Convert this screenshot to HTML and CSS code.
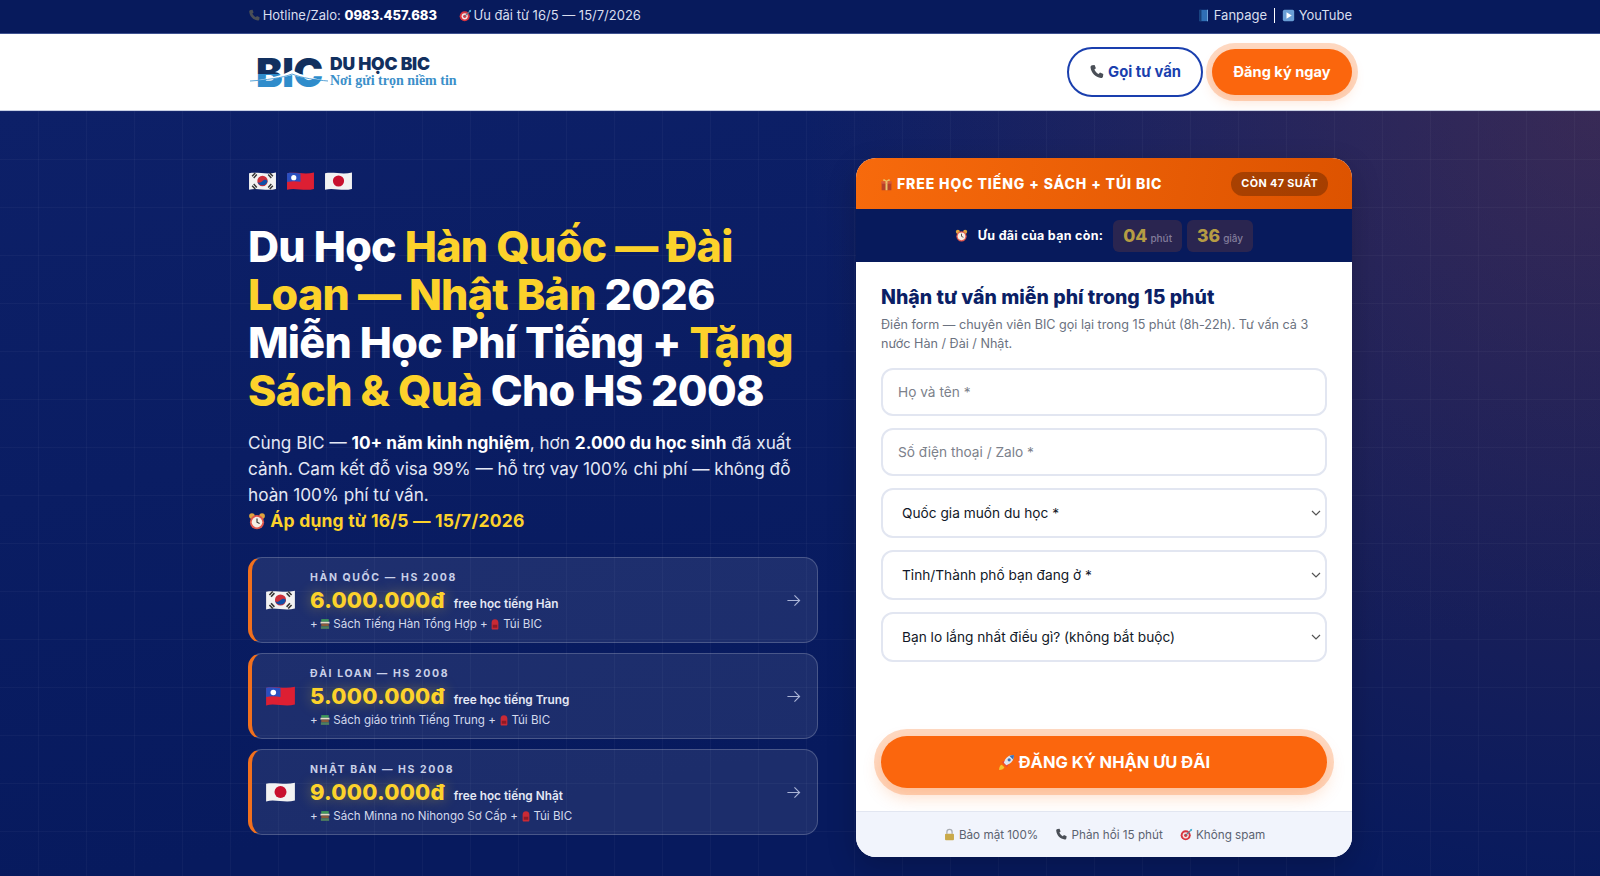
FILE: index.html
```html
<!doctype html>
<html lang="vi">
<head>
  <meta charset="UTF-8">
  <meta name="viewport" content="width=device-width, initial-scale=1.0">
  <title>Du Học BIC</title>
  <link rel="stylesheet" href="styles.css">
</head>
<body>
<svg class="sprite" aria-hidden="true">
  <symbol id="i-phone" viewBox="0 0 16 16"><path fill="#4a4f57" d="M3.2 1.2 5.6 1l1.3 3.3-1.5 1.2c.7 1.900 2.200 3.500 4.300 4.500l1.300-1.500 3.300 1.500-.3 2.500c-.2 1-1 1.600-2 1.500C6.300 13.300 2.300 9.200 1.500 3.300c-.1-1 .6-1.900 1.700-2.100z"/></symbol>
  <symbol id="i-dart" viewBox="0 0 16 16"><circle cx="7" cy="9" r="6.200" fill="#d8343f"/><circle cx="7" cy="9" r="3.800" fill="#f1e6e6"/><circle cx="7" cy="9" r="2" fill="#d8343f"/><path d="M7 9 14 2" stroke="#5d7f94" stroke-width="1.400"/><path d="M12.500 1.500 15 1l-.4 2.600-2 .5z" fill="#4fb4d8"/></symbol>
  <symbol id="i-book" viewBox="0 0 16 16"><path fill="#2f6fb5" d="M3 1h10.500v14H3z"/><path fill="#173f78" d="M3 1h2.500v14H3z"/><path fill="#7fb0de" d="M12.500 1h1v14h-1z"/></symbol>
  <symbol id="i-play" viewBox="0 0 16 16"><rect x="1" y="1" width="14" height="14" rx="2" fill="#6a9fd6"/><path d="M5.500 4v8l6.500-4z" fill="#fff"/></symbol>
  <symbol id="i-gift" viewBox="0 0 16 16"><path fill="#b6412a" d="M2 6h12v9H2z"/><path fill="#e9c46a" d="M6.800 3h2.400v12H6.800z"/><path fill="#d65a3a" d="M1.500 4h13v3h-13z"/><path fill="#e9c46a" d="M6.800 4h2.400v3H6.800zM8 4C6 .5 3 1 4 3.500zM8 4c2-3.500 5-3 4-.5z"/></symbol>
  <symbol id="i-clock" viewBox="0 0 16 16"><circle cx="3.500" cy="3.500" r="2.500" fill="#e0a53d"/><circle cx="12.500" cy="3.500" r="2.500" fill="#e0a53d"/><circle cx="8" cy="9" r="6.300" fill="#e2574c"/><circle cx="8" cy="9" r="4.700" fill="#f6efe6"/><path d="M8 5.800V9l2.300 1.200" stroke="#333" stroke-width="1" fill="none"/></symbol>
  <symbol id="i-rocket" viewBox="0 0 16 16"><path fill="#f4c430" d="M1 15c0-3 1-4.500 2.500-5L6 12.500C5.500 14 4 15 1 15z"/><path fill="#e5483f" d="M3.500 7.500 6.500 6l3.500 3.500L8.500 12.500z"/><path fill="#dfe5f0" d="M15 1c-5 0-8 2.500-9.500 7.200l2.300 2.300C12.500 9 15 6 15 1z"/><circle cx="10.500" cy="5.500" r="1.500" fill="#3b6fb5"/><path fill="#3b6fb5" d="M15 1c-1.600 0-3 .3-4.200 .8l3.400 3.400C14.700 4 15 2.600 15 1z"/></symbol>
  <symbol id="i-lock" viewBox="0 0 16 16"><path d="M4.800 7V5a3.200 3.200 0 0 1 6.400 0v2" fill="none" stroke="#a9adb3" stroke-width="1.600"/><rect x="2.500" y="7" width="11" height="8" rx="1.200" fill="#c9a94a"/></symbol>
  <symbol id="i-books" viewBox="0 0 16 16"><path fill="#3f9a5a" d="M3 1.500h10v3.500H3z"/><path fill="#e4dcc6" d="M2 5h12v2.500H2z"/><path fill="#8a5a3a" d="M3 7.500h10V11H3z"/><path fill="#4f7f5f" d="M2.500 11h11v3.500h-11z"/></symbol>
  <symbol id="i-bag" viewBox="0 0 16 16"><path fill="#c92a35" d="M3.500 6C3.500 3 5.500 1.500 8 1.500S12.500 3 12.500 6v8c0 .8-.6 1.300-1.300 1.300H4.800c-.7 0-1.300-.5-1.300-1.300z"/><path fill="#8f1a24" d="M5 9h6v4H5z"/></symbol>
  <symbol id="f-kr" viewBox="0 0 28 20"><path fill="#f2f2f2" d="M1 2.500c8-1.700 17 1.700 26-.8v16c-9 2.500-18-1.500-26 .8z"/><circle cx="14" cy="10" r="5" fill="#cd2e3a"/><path fill="#0f4fa8" d="M9.200 11c1.600 1.600 3.400.2 4.800-1 1.400-1.200 3.400-2 4.800 0a5 5 0 0 1-9.600 1z"/><path stroke="#333" stroke-width="1.400" d="m4 5.500 3-3.200M5.500 7l3-3.200M19.500 3.800l3 3.200M21 2.300l3 3.200M4 14.500l3 3.200M5.500 13l3 3.200M19.500 16.200l3-3.200M21 17.700l3-3.200"/></symbol>
  <symbol id="f-tw" viewBox="0 0 28 20"><path fill="#dd1f33" d="M1 2.500c8-1.700 17 1.700 26-.8v16c-9 2.500-18-1.500-26 .8z"/><path fill="#2a4fc0" d="M1 2.500c4-.9 8.500-.3 13 .3v8c-4.500-.6-9-.7-13 .2z"/><circle cx="7.500" cy="6.800" r="2.500" fill="#fff"/></symbol>
  <symbol id="f-jp" viewBox="0 0 28 20"><path fill="#f2f2f2" d="M1 2.500c8-1.700 17 1.700 26-.8v16c-9 2.500-18-1.500-26 .8z"/><circle cx="14" cy="10" r="5.400" fill="#c8102e"/></symbol>
  <symbol id="i-arrow" viewBox="0 0 16 16"><path d="M1.500 8h13M9 2.500 14.500 8 9 13.500" fill="none" stroke="currentColor" stroke-width="1.200"/></symbol>
</svg>

<div class="topbar">
  <div class="wrap topbar-in">
    <div class="topbar-left">
      <span><svg class="ico"><use href="#i-phone"/></svg> Hotline/Zalo: <b>0983.457.683</b></span>
      <span><svg class="ico"><use href="#i-dart"/></svg> Ưu đãi từ 16/5 — 15/7/2026</span>
    </div>
    <div class="topbar-right">
      <span><svg class="ico"><use href="#i-book"/></svg> Fanpage</span>
      <i class="sep"></i>
      <span><svg class="ico"><use href="#i-play"/></svg> YouTube</span>
    </div>
  </div>
</div>

<header class="header">
  <div class="wrap header-in">
    <a class="logo" href="#">
      <svg class="logo-mark" viewBox="0 0 80 36">
        <defs>
          <linearGradient id="bic" gradientUnits="userSpaceOnUse" x1="0" y1="0" x2="0" y2="36">
            <stop offset="0.56" stop-color="#12305f"/>
            <stop offset="0.56" stop-color="#2f8ccb"/>
          </linearGradient>
        </defs>
        <text x="8" y="33" class="logo-bic" fill="url(#bic)">BIC</text>
        <path d="M2 27C20 25 34 22 44 16 54 22 68 25 80 27 66 25 54 24 44 21 34 24 18 26 2 27z" fill="#fff"/>
        <path d="M2 27C18 26 34 24 44 20 54 24 68 26 80 27" fill="none" stroke="#2f8ccb" stroke-width=".8"/>
      </svg>
      <span class="logo-text">
        <strong>DU HỌC BIC</strong>
        <em>Nơi gửi trọn niềm tin</em>
      </span>
    </a>
    <nav class="header-nav">
      <a class="btn-call" href="#"><svg class="ico ico-lg"><use href="#i-phone"/></svg> Gọi tư vấn</a>
      <a class="btn-reg" href="#">Đăng ký ngay</a>
    </nav>
  </div>
</header>

<main class="hero">
  <div class="wrap hero-in">
    <section class="hero-left">
      <div class="flags">
        <svg><use href="#f-kr"/></svg>
        <svg><use href="#f-tw"/></svg>
        <svg><use href="#f-jp"/></svg>
      </div>
      <h1>Du Học <span>Hàn Quốc — Đài Loan — Nhật Bản</span> 2026 Miễn Học Phí Tiếng + <span>Tặng Sách &amp; Quà</span> Cho HS 2008</h1>
      <p class="lead">Cùng BIC — <b>10+ năm kinh nghiệm</b>, hơn <b>2.000 du học sinh</b> đã xuất cảnh. Cam kết đỗ visa 99% — hỗ trợ vay 100% chi phí — không đỗ hoàn 100% phí tư vấn.</p>
      <p class="apply"><svg><use href="#i-clock"/></svg> Áp dụng từ 16/5 — 15/7/2026</p>

      <div class="offers">
        <a class="offer" href="#">
          <svg class="offer-flag"><use href="#f-kr"/></svg>
          <div class="offer-body">
            <div class="offer-label">HÀN QUỐC — HS 2008</div>
            <div class="offer-price"><b>6.000.000đ</b> <span>free học tiếng Hàn</span></div>
            <div class="offer-sub">+ <svg class="ico"><use href="#i-books"/></svg> Sách Tiếng Hàn Tổng Hợp + <svg class="ico"><use href="#i-bag"/></svg> Túi BIC</div>
          </div>
          <svg class="offer-arrow"><use href="#i-arrow"/></svg>
        </a>
        <a class="offer" href="#">
          <svg class="offer-flag"><use href="#f-tw"/></svg>
          <div class="offer-body">
            <div class="offer-label">ĐÀI LOAN — HS 2008</div>
            <div class="offer-price"><b>5.000.000đ</b> <span>free học tiếng Trung</span></div>
            <div class="offer-sub">+ <svg class="ico"><use href="#i-books"/></svg> Sách giáo trình Tiếng Trung + <svg class="ico"><use href="#i-bag"/></svg> Túi BIC</div>
          </div>
          <svg class="offer-arrow"><use href="#i-arrow"/></svg>
        </a>
        <a class="offer" href="#">
          <svg class="offer-flag"><use href="#f-jp"/></svg>
          <div class="offer-body">
            <div class="offer-label">NHẬT BẢN — HS 2008</div>
            <div class="offer-price"><b>9.000.000đ</b> <span>free học tiếng Nhật</span></div>
            <div class="offer-sub">+ <svg class="ico"><use href="#i-books"/></svg> Sách Minna no Nihongo Sơ Cấp + <svg class="ico"><use href="#i-bag"/></svg> Túi BIC</div>
          </div>
          <svg class="offer-arrow"><use href="#i-arrow"/></svg>
        </a>
      </div>
    </section>

    <aside class="card">
      <div class="card-top">
        <span class="card-title"><svg class="ico"><use href="#i-gift"/></svg> FREE HỌC TIẾNG + SÁCH + TÚI BIC</span>
        <span class="card-badge">CÒN 47 SUẤT</span>
      </div>
      <div class="timer">
        <svg class="ico"><use href="#i-clock"/></svg>
        <span class="timer-label">Ưu đãi của bạn còn:</span>
        <div class="timer-box"><b>04</b> phút</div>
        <div class="timer-box"><b>36</b> giây</div>
      </div>
      <form class="form">
        <h2>Nhận tư vấn miễn phí trong 15 phút</h2>
        <p>Điền form — chuyên viên BIC gọi lại trong 15 phút (8h-22h). Tư vấn cả 3 nước Hàn / Đài / Nhật.</p>
        <input type="text" placeholder="Họ và tên *">
        <input type="text" placeholder="Số điện thoại / Zalo *">
        <select><option>Quốc gia muốn du học *</option></select>
        <select><option>Tỉnh/Thành phố bạn đang ở *</option></select>
        <select><option>Bạn lo lắng nhất điều gì? (không bắt buộc)</option></select>
        <button type="button" class="submit"><svg><use href="#i-rocket"/></svg> ĐĂNG KÝ NHẬN ƯU ĐÃI</button>
      </form>
      <div class="trust">
        <span><svg class="ico"><use href="#i-lock"/></svg> Bảo mật 100%</span>
        <span><svg class="ico"><use href="#i-phone"/></svg> Phản hồi 15 phút</span>
        <span><svg class="ico"><use href="#i-dart"/></svg> Không spam</span>
      </div>
    </aside>
  </div>
</main>
</body>
</html>
```

FILE: styles.css
```css
* {
  box-sizing: border-box;
}
html, body {
  margin: 0;
  height: 100%;
}
body {
  font-family: "Inter", "Noto Sans", sans-serif;
  color: #fff;
  background: #071a5e;
  overflow: hidden;
}
a {
  color: inherit;
  text-decoration: none;
}
.sprite {
  position: absolute;
  width: 0;
  height: 0;
}
.wrap {
  width: 1104px;
  margin: 0 auto;
}
.ico {
  width: 13px;
  height: 13px;
  vertical-align: -2px;
}
.ico-lg {
  width: 16px;
  height: 16px;
  vertical-align: -3px;
}

/* top bar */
.topbar {
  height: 34px;
  padding-bottom: 3px;
  background: #071a5c;
  border-bottom: 1px solid #3f5290;
  font-size: 13px;
  color: #d9deee;
}
.topbar-in {
  height: 100%;
  display: flex;
  justify-content: space-between;
  align-items: center;
}
.topbar-left {
  display: flex;
  gap: 22px;
}
.topbar-left .ico {
  margin-right: -2px;
}
.topbar-left b {
  color: #fff;
  font-weight: 800;
}
.topbar-right {
  display: flex;
  align-items: center;
  gap: 7px;
}
.sep {
  width: 1px;
  height: 15px;
  background: #fff;
}

/* header */
.header {
  height: 77px;
  background: #fff;
  border-bottom: 1px solid #c7cfe4;
}
.header-in {
  height: 100%;
  display: flex;
  justify-content: space-between;
  align-items: center;
}
.logo {
  display: flex;
  align-items: center;
  gap: 2px;
}
.logo-mark {
  width: 80px;
  height: 36px;
  overflow: visible;
}
.logo-bic {
  font-family: "Inter", sans-serif;
  font-weight: 900;
  font-size: 40px;
  letter-spacing: -.5px;
}
.logo-text {
  display: flex;
  flex-direction: column;
  line-height: 17px;
}
.logo-text strong {
  font-size: 17.500px;
  font-weight: 900;
  color: #12305f;
  letter-spacing: -.2px;
}
.logo-text em {
  font-family: "Liberation Serif", serif;
  font-style: normal;
  font-weight: 700;
  font-size: 14px;
  color: #3b8fc9;
}
.header-nav {
  display: flex;
  align-items: center;
  gap: 9px;
}
.btn-call {
  width: 136px;
  height: 50px;
  display: flex;
  justify-content: center;
  align-items: center;
  gap: 3px;
  border: 2px solid #1a3fae;
  border-radius: 25px;
  color: #1a3fae;
  font-weight: 700;
  font-size: 14.800px;
}
.btn-reg {
  width: 140px;
  height: 46px;
  display: flex;
  justify-content: center;
  align-items: center;
  border-radius: 23px;
  background: #fb660d;
  box-shadow: 0 0 0 6px rgba(251, 102, 13, .25), 0 6px 14px rgba(251, 102, 13, .2);
  font-weight: 700;
  font-size: 14.600px;
}

/* hero */
.hero {
  height: 765px;
  background-color: #071a5e;
  background-image:
    linear-gradient(rgba(255, 255, 255, .03) 1px, transparent 1px),
    linear-gradient(90deg, rgba(255, 255, 255, .03) 1px, transparent 1px),
    radial-gradient(circle at 100% 0, rgba(200, 80, 40, .24), transparent 45%),
    linear-gradient(170deg, #0d2068, #071a5e 75%);
  background-size: 48px 48px, 48px 48px, 100% 100%, 100% 100%;
  background-position: -10px 0, -10px 0, 0 0, 0 0;
}
.hero-in {
  display: grid;
  grid-template-columns: 570px 496px;
  column-gap: 38px;
  padding-top: 47px;
}
.flags {
  display: flex;
  gap: 9px;
  margin-top: 12px;
}
.flags svg {
  width: 29px;
  height: 22px;
}
.hero-left h1 {
  margin: 30px 0 0;
  font-size: 43px;
  line-height: 48px;
  font-weight: 800;
  letter-spacing: -.7px;
}
.hero-left h1 span {
  color: #fcd22b;
}
.lead {
  margin: 16px 0 0;
  font-size: 17.200px;
  line-height: 26px;
  color: #e4e8f5;
}
.lead b {
  color: #fff;
  font-weight: 700;
}
.apply {
  margin: 0;
  font-size: 17.500px;
  line-height: 26px;
  font-weight: 700;
  letter-spacing: .2px;
  color: #fcd22b;
}
.apply svg {
  width: 18px;
  height: 18px;
  vertical-align: -3px;
}
.offers {
  display: flex;
  flex-direction: column;
  gap: 10px;
  margin-top: 23px;
}
.offer {
  height: 86px;
  display: flex;
  align-items: center;
  padding: 0 16px 0 13px;
  background: rgba(255, 255, 255, .085);
  border: 1.500px solid rgba(255, 255, 255, .2);
  border-left: 4px solid #f1701d;
  border-radius: 14px;
}
.offer-flag {
  width: 31px;
  height: 24px;
  flex: none;
}
.offer-body {
  flex: 1;
  margin-left: 14px;
  padding-top: 1px;
}
.offer-label {
  font-size: 10.500px;
  font-weight: 700;
  letter-spacing: 1.600px;
  line-height: 16px;
  color: #c9d0e8;
}
.offer-price {
  display: flex;
  align-items: baseline;
  gap: 9px;
  line-height: 29px;
}
.offer-price b {
  font-size: 22px;
  font-weight: 800;
  color: #fcd22b;
  letter-spacing: .2px;
  text-shadow: 0 0 14px rgba(252, 210, 43, .4);
}
.offer-price span {
  font-size: 11.800px;
  font-weight: 600;
  color: #e4e8f5;
}
.offer-sub {
  margin-top: -1px;
  font-size: 11.600px;
  line-height: 13px;
  color: #d3d9ec;
}
.offer-sub .ico {
  width: 12px;
  height: 12px;
  margin: 0 -1.500px;
}
.offer-arrow {
  width: 15px;
  height: 15px;
  flex: none;
  color: #aab4d6;
}

/* form card */
.card {
  height: 699px;
  display: flex;
  flex-direction: column;
  overflow: hidden;
  border-radius: 20px;
  background: #fff;
  box-shadow: 0 10px 30px rgba(0, 0, 0, .2);
}
.card-top {
  height: 51px;
  flex: none;
  display: flex;
  justify-content: space-between;
  align-items: center;
  padding: 0 24px;
  background: linear-gradient(100deg, #f76a0c, #dd5300);
}
.card-title {
  font-size: 14px;
  font-weight: 800;
  letter-spacing: .9px;
}
.card-badge {
  padding: 0 10px;
  height: 24px;
  line-height: 24px;
  border-radius: 12px;
  background: rgba(80, 30, 0, .4);
  font-size: 10.800px;
  font-weight: 700;
  letter-spacing: .4px;
}
.timer {
  height: 53px;
  flex: none;
  display: flex;
  justify-content: center;
  align-items: center;
  gap: 5px;
  background: #071a5c;
  font-size: 12.500px;
  font-weight: 700;
}
.timer .ico {
  margin-right: 5px;
}
.timer-label {
  margin-right: 5px;
  letter-spacing: .3px;
}
.timer-box {
  height: 32px;
  padding: 0 10px;
  display: flex;
  align-items: baseline;
  gap: 3px;
  line-height: 31px;
  border-radius: 6px;
  background: rgba(251, 102, 13, .15);
  font-size: 10px;
  font-weight: 500;
  color: #837d9b;
}
.timer-box b {
  font-size: 17.500px;
  font-weight: 800;
  color: #b69c44;
}
.form {
  flex: 1;
  display: flex;
  flex-direction: column;
  padding: 21px 25px 0;
  color: #111827;
}
.form h2 {
  margin: 0;
  font-size: 19.500px;
  line-height: 28px;
  font-weight: 800;
  color: #0b1f66;
}
.form p {
  margin: 4px 0 0;
  font-size: 12.600px;
  line-height: 19px;
  color: #6b7280;
}
.form input,
.form select {
  width: 100%;
  flex: none;
  border: 2px solid #e2e6f1;
  border-radius: 12px;
  background: #fff;
  font-family: inherit;
  font-size: 13.700px;
  color: #111827;
}
.form input {
  height: 48px;
  margin-bottom: 12px;
  padding: 0 15px;
}
.form input:first-of-type {
  margin-top: 15px;
}
.form input::placeholder {
  color: #7c818b;
  opacity: 1;
}
.form select {
  height: 50px;
  margin-bottom: 12px;
  padding: 0 19px;
  appearance: none;
  background: #fff url("data:image/svg+xml,%3Csvg xmlns='http://www.w3.org/2000/svg' width='10' height='6'%3E%3Cpath d='M1 1l4 4 4-4' fill='none' stroke='%23555' stroke-width='1.200'/%3E%3C/svg%3E") no-repeat right 4px center;
}
.submit {
  height: 52px;
  margin-top: 62px;
  flex: none;
  border: 0;
  border-radius: 26px;
  background: #fb660d;
  box-shadow: 0 0 0 7px rgba(251, 102, 13, .25), 0 8px 18px rgba(251, 102, 13, .25);
  color: #fff;
  font-family: inherit;
  font-size: 16.500px;
  font-weight: 700;
}
.submit svg {
  width: 17px;
  height: 17px;
  vertical-align: -3px;
}
.trust {
  height: 46px;
  flex: none;
  display: flex;
  justify-content: center;
  align-items: center;
  gap: 17px;
  background: #f1f4fc;
  border-top: 1px solid #e2e6f1;
  font-size: 11.700px;
  color: #5b6270;
}
```
